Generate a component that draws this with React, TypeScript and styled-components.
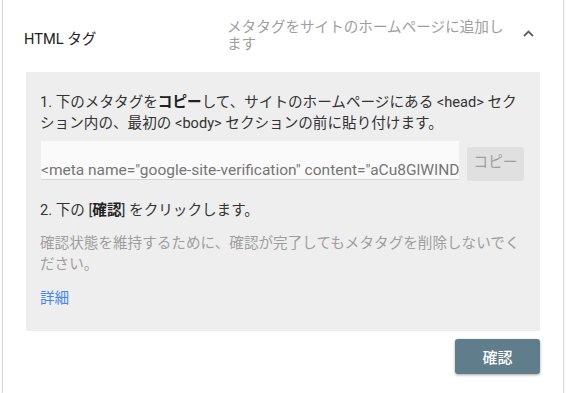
import React from "react";
import styled, { createGlobalStyle } from "styled-components";

const Global = createGlobalStyle`
  html, body { margin: 0; padding: 0; background: #ffffff; }
  body { font-family: Roboto, "Noto Sans CJK JP", sans-serif; }
`;

const Page = styled.div`
  width: 567px;
  height: 393px;
  overflow: hidden;
  background: #ffffff;
`;

const Card = styled.div`
  margin: -10px 0 0 3px;
  width: 560px;
  padding-top: 10px;
  background: #fff;
  box-shadow: 0 1px 2px rgba(0, 0, 0, 0.35), 0 0 2px rgba(0, 0, 0, 0.15);
`;

const Header = styled.div`
  display: flex;
  align-items: flex-start;
  height: 72px;
  box-sizing: border-box;
  padding: 19px 0 0 21px;
`;

const Title = styled.div`
  width: 203px;
  margin-top: 10px;
  font-size: 14.6px;
  line-height: 20px;
  color: #212121;
`;

const Desc = styled.div`
  width: 286px;
  font-size: 14.6px;
  line-height: 17px;
  color: #9e9e9e;
`;

const Chevron = styled.div`
  margin: 11px 0 0 10px;
  width: 11px;
  height: 7px;
  display: flex;
`;

const Panel = styled.div`
  margin: 0 23px 0 23px;
  background: #eeeeee;
  padding: 20px 14px 22px 14px;
`;

const Para = styled.p<{ $muted?: boolean; $gap?: number }>`
  margin: ${(p) => p.$gap ?? 0}px 0 0 0;
  font-size: 14.6px;
  line-height: 21px;
  color: ${(p) => (p.$muted ? "#9e9e9e" : "#333333")};
`;

const Strong = styled.b`
  font-weight: 700;
  color: #212121;
`;

const InputRow = styled.div`
  display: flex;
  align-items: flex-end;
  gap: 8px;
  margin-top: 7px;
`;

const Field = styled.div`
  width: 418px;
  height: 39px;
  box-sizing: border-box;
  margin-left: 1px;
  background: #fafafa;
  border-bottom: 1px solid #d6d6d6;
  overflow: hidden;
  white-space: nowrap;
  font-size: 15.5px;
  line-height: 20px;
  color: #757575;
  padding-top: 19px;
`;

const CopyButton = styled.button`
  width: 57px;
  height: 34px;
  border: none;
  border-radius: 3px;
  background: #e0e0e0;
  color: #9e9e9e;
  font-family: inherit;
  font-size: 14.6px;
  padding: 0 0 8px 0;
  margin-bottom: -1px;
`;

const Link = styled.a`
  display: block;
  margin-top: 13px;
  font-size: 14.6px;
  line-height: 21px;
  color: #4285f4;
  text-decoration: none;
`;

const Footer = styled.div`
  display: flex;
  justify-content: flex-end;
  padding: 8px 23px 19px 0;
`;

const ConfirmButton = styled.button`
  width: 85px;
  height: 35px;
  border: none;
  border-radius: 3px;
  background: #607d8b;
  color: #ffffff;
  font-family: inherit;
  font-size: 15px;
  font-weight: 500;
  box-shadow: 0 1px 3px rgba(0, 0, 0, 0.35);
`;

export default function App() {
  return (
    <Page>
      <Global />
      <Card>
        <Header>
          <Title>HTML タグ</Title>
          <Desc>メタタグをサイトのホームページに追加します</Desc>
          <Chevron>
            <svg width="11" height="7" viewBox="0 0 11 7">
              <polyline points="1,6 5.5,1.5 10,6" fill="none" stroke="#616161" strokeWidth="1.8" />
            </svg>
          </Chevron>
        </Header>
        <Panel>
          <Para>
            1. 下のメタタグを<Strong>コピー</Strong>して、サイトのホームページにある &lt;head&gt; セクション内の、最初の &lt;body&gt; セクションの前に貼り付けます。
          </Para>
          <InputRow>
            <Field>&lt;meta name="google-site-verification" content="aCu8GlWIND</Field>
            <CopyButton>コピー</CopyButton>
          </InputRow>
          <Para $gap={20}>
            2. 下の [<Strong>確認</Strong>] をクリックします。
          </Para>
          <Para $muted $gap={12}>
            確認状態を維持するために、確認が完了してもメタタグを削除しないでください。
          </Para>
          <Link href="#">詳細</Link>
        </Panel>
        <Footer>
          <ConfirmButton>確認</ConfirmButton>
        </Footer>
      </Card>
    </Page>
  );
}
